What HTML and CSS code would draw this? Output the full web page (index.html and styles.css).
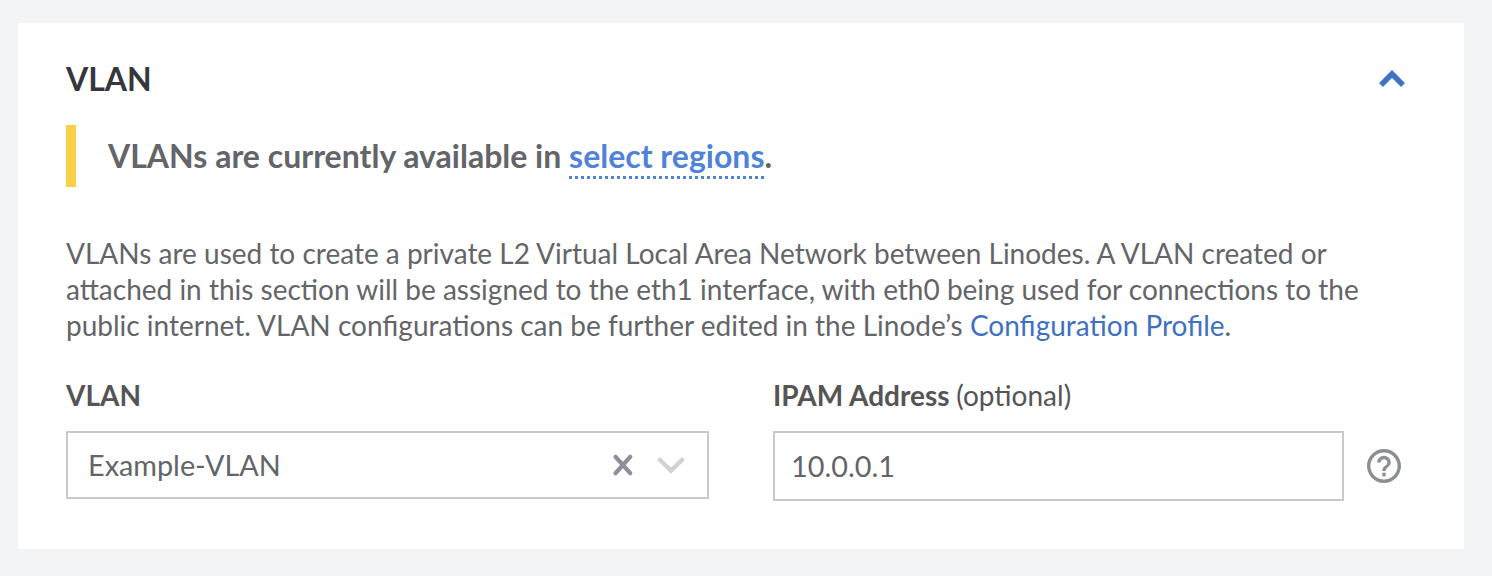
FILE: index.html
```html
<!DOCTYPE html>
<html lang="en">
<head>
<meta charset="utf-8">
<title>VLAN</title>
<link rel="stylesheet" href="styles.css">
</head>
<body>
<section class="panel">
  <header class="panel-header">
    <h2 class="title">VLAN</h2>
    <svg class="collapse" width="28" height="18" viewBox="0 0 28 18"><path d="M3 15 14 4 25 15" fill="none" stroke="#3e73c8" stroke-width="5.5"/></svg>
  </header>
  <div class="notice"><p class="notice-text">VLANs are currently available in <a class="regions">select regions</a>.</p></div>
  <p class="description">VLANs are used to create a private L2 Virtual Local Area Network between Linodes. A VLAN created or<br>attached in this section will be assigned to the eth1 interface, with eth0 being used for connections to the<br>public internet. VLAN configurations can be further edited in the Linode’s <a class="link">Configuration Profile</a>.</p>
  <div class="fields">
    <div class="field field-vlan">
      <label class="label">VLAN</label>
      <div class="select">
        <span class="value">Example-VLAN</span>
        <svg class="clear" width="20" height="20" viewBox="0 0 20 20"><path d="M2.6 1.9 17.2 18.1M17.2 1.9 2.6 18.1" fill="none" stroke="#8e8f9b" stroke-width="4.4" stroke-linecap="round"/></svg>
        <svg class="chevron" width="30" height="20" viewBox="0 0 30 20"><path d="M2.5 3.5 15 15.6 27.5 3.5" fill="none" stroke="#d2d2d2" stroke-width="4.4"/></svg>
      </div>
    </div>
    <div class="field field-ipam">
      <label class="label">IPAM Address <span class="optional">(optional)</span></label>
      <div class="input"><span class="value">10.0.0.1</span></div>
    </div>
    <svg class="help" width="34" height="34" viewBox="2 2 20 20"><path fill="#8c8f91" d="M11 18h2v-2h-2v2zm1-16C6.480 2 2 6.480 2 12s4.480 10 10 10 10-4.480 10-10S17.520 2 12 2zm0 18c-4.410 0-8-3.590-8-8s3.590-8 8-8 8 3.590 8 8-3.590 8-8 8zm0-14c-2.210 0-4 1.790-4 4h2c0-1.100.9-2 2-2s2 .9 2 2c0 2-3 1.750-3 5h2c0-2.250 3-2.500 3-5 0-2.210-1.790-4-4-4z"/></svg>
  </div>
</section>
</body>
</html>
```
FILE: styles.css
```css
* { box-sizing: border-box; }
body { margin: 0; padding: 23px 28px 27px 18px; background: #f3f4f6; color: #636568; font-family: Lato, "Liberation Sans", sans-serif; }
h2, p { margin: 0; }
.panel { height: 526px; padding: 35px 48px; background: #fff; }
.panel-header { display: flex; justify-content: space-between; height: 67px; padding-right: 10px; }
.title { color: #36373d; font-size: 32px; font-weight: 700; line-height: 42px; }
.collapse { margin-top: 12px; }
.notice { display: flex; align-items: center; height: 62px; padding-left: 32px; border-left: 10px solid #f8d149; border-radius: 1px; }
.notice-text { font-size: 32px; font-weight: 700; line-height: 44px; white-space: nowrap; }
.regions { color: #5083d8; padding-bottom: 1px; border-bottom: 3px dotted #5083d8; }
.link { color: #3f70c2; }
.description { margin-top: 48px; font-size: 28px; line-height: 36px; white-space: nowrap; }
.fields { display: flex; margin-top: 34px; }
.field { display: flex; flex-direction: column; }
.field-vlan { width: 643px; }
.field-ipam { width: 571px; margin-left: 64px; }
.label { height: 54px; color: #555; font-size: 28px; font-weight: 700; line-height: 36px; white-space: nowrap; }
.optional { font-weight: 400; }
.select, .input { display: flex; align-items: center; border: 2px solid #c9c9c9; font-size: 28.8px; }
.select { height: 68px; padding: 0 21px 0 20px; }
.input { height: 70px; padding-left: 16px; }
.clear { margin-left: auto; overflow: visible; }
.chevron { margin-left: 23px; }
.help { margin: 72px 0 0 23px; }
```
